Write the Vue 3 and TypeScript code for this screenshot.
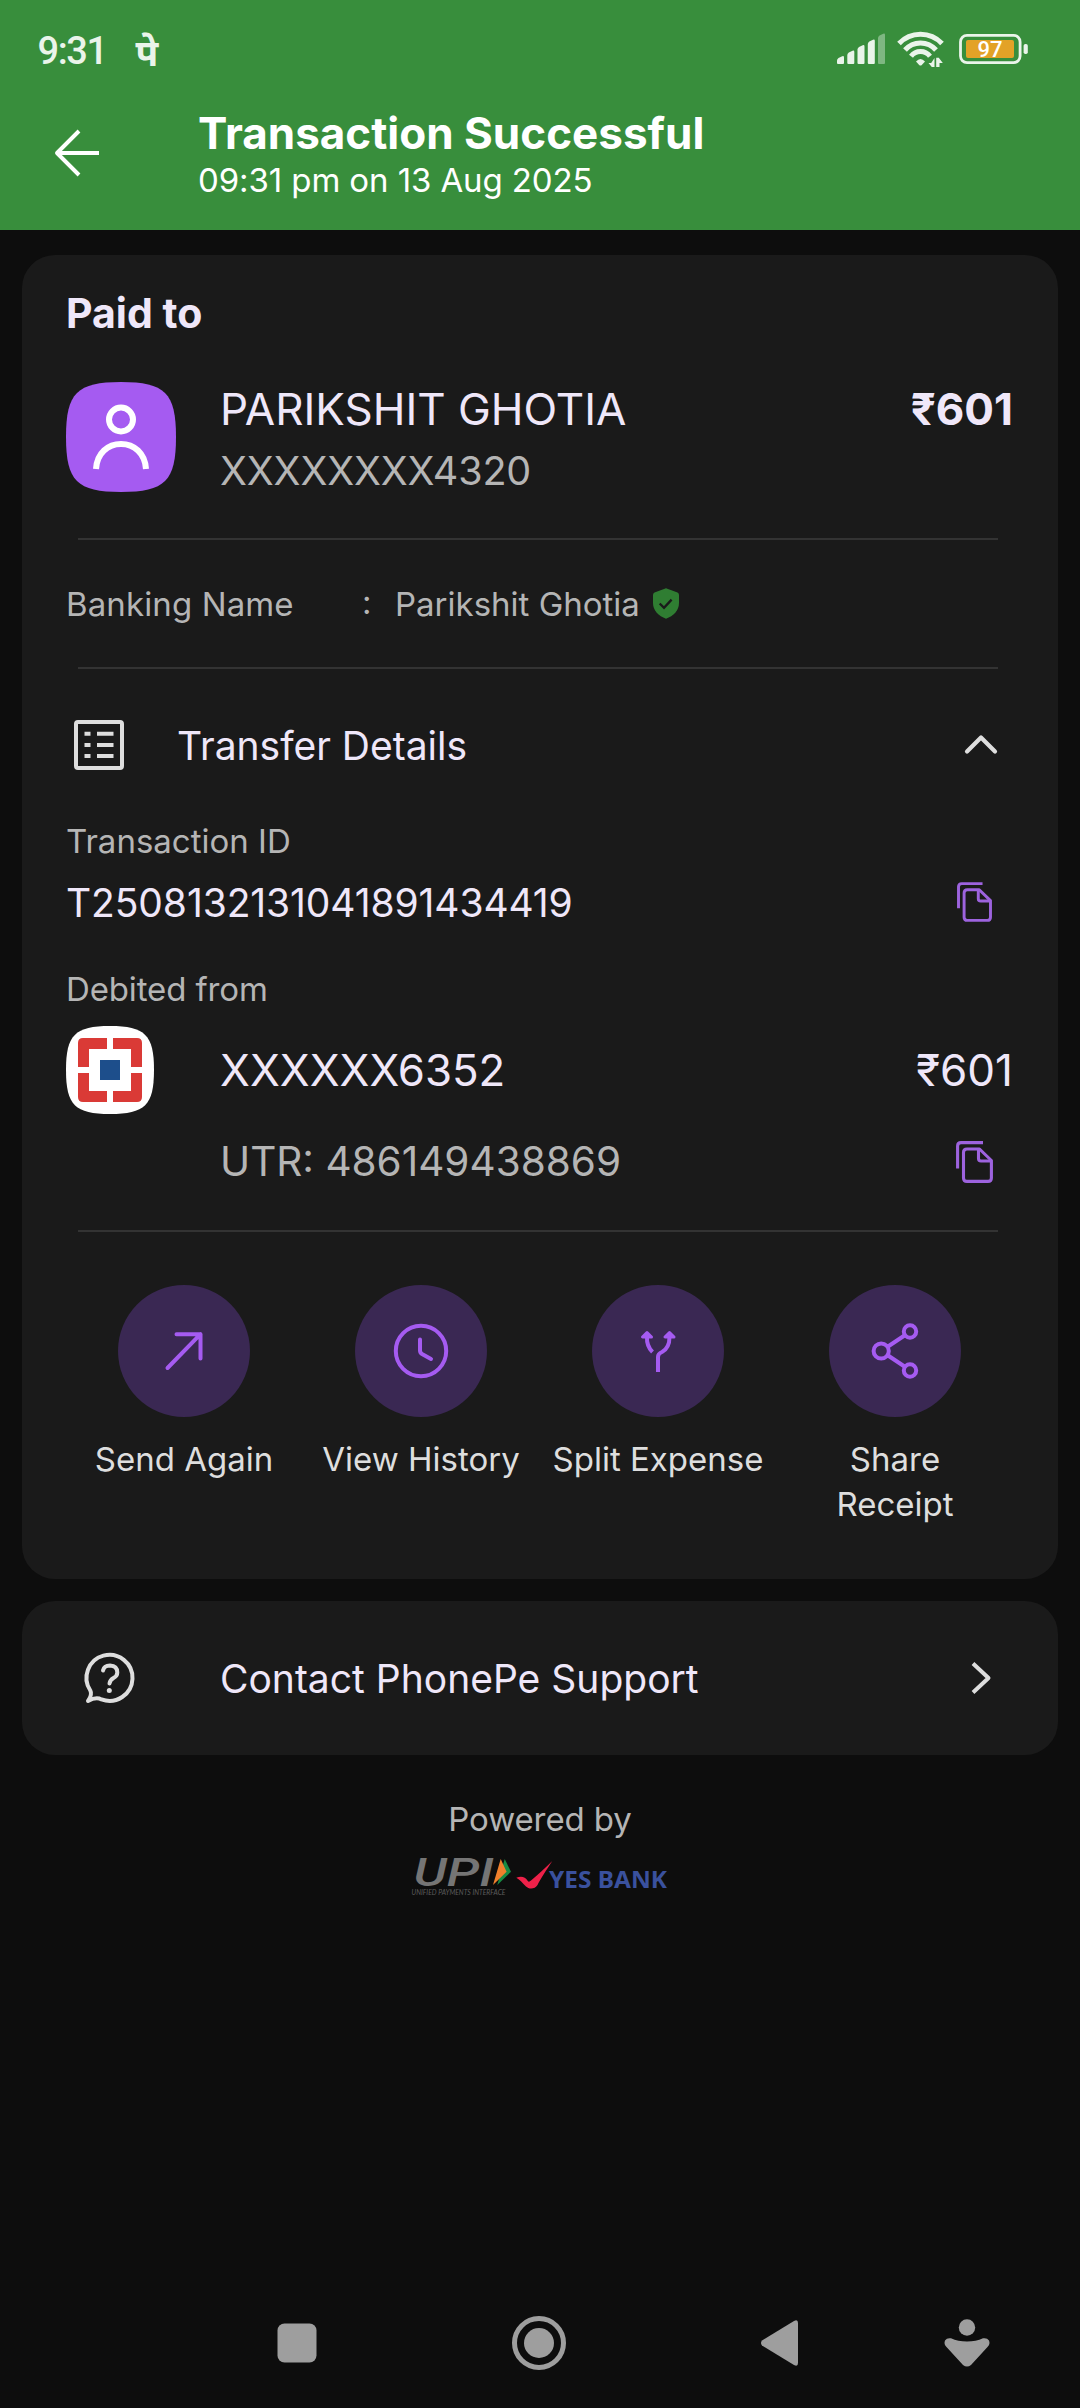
<script setup lang="ts">
interface Action {
  id: 'send' | 'history' | 'split' | 'share'
  label: string
}

const actions: Action[] = [
  { id: 'send', label: 'Send Again' },
  { id: 'history', label: 'View History' },
  { id: 'split', label: 'Split Expense' },
  { id: 'share', label: 'Share Receipt' },
]

const signalBars = [
  { x: 0, top: 23 },
  { x: 10.3, top: 17.5 },
  { x: 20.5, top: 12 },
  { x: 30.8, top: 6.5 },
  { x: 41, top: 0.5 },
]
</script>

<template>
  <div class="screen">
    <header class="header">
      <div class="status">
        <span class="clock">9:31</span>
        <span class="pe">पे</span>
        <svg class="signal" width="49" height="32" viewBox="0 0 49 32">
          <path
            v-for="(b, i) in signalBars"
            :key="b.x"
            :d="`M${b.x} ${b.top + 4.5} Q${b.x} ${b.top + 3} ${b.x + 1.5} ${b.top + 2} L${b.x + 5.2} ${b.top + 0.3} Q${b.x + 7} ${b.top - 0.5} ${b.x + 7} ${b.top + 1.5} V30 Q${b.x + 7} 31 ${b.x + 6} 31 H${b.x + 1} Q${b.x} 31 ${b.x} 30Z`"
            fill="#eaf4ea"
            :opacity="i === 4 ? 0.4 : 1"
          />
        </svg>
        <svg class="wifi" width="48" height="38" viewBox="0 0 48 38">
          <g fill="none" stroke="#eaf4ea" stroke-width="5">
            <path d="M2 13.5 A29.5 29.5 0 0 1 45 13.5" />
            <path d="M8 20 A20.5 20.5 0 0 1 39 20" />
            <path d="M14 26.2 A12 12 0 0 1 33 26.2" />
          </g>
          <path d="M19 31.5 Q23.5 26.5 28 31.5 L24.8 35 Q23.5 36.2 22.2 35Z" fill="#eaf4ea" />
          <path
            d="M31.5 33 H34.2 L37.5 28 V37 H34.800Z M39.2 27.800 H41.8 L45.8 33 H42.5 V37 H39.2Z"
            fill="#eaf4ea"
          />
        </svg>
        <svg class="battery" width="70" height="32" viewBox="0 0 70 32">
          <rect x="1.5" y="2.4" width="59.6" height="27.2" rx="6.5" fill="none" stroke="#eaf4ea" stroke-width="2.8" />
          <rect x="7" y="7" width="48" height="18" rx="2" fill="#e3a227" />
          <rect x="64.6" y="11" width="4.2" height="10" rx="1.8" fill="#eaf4ea" />
          <text x="18.6" y="24.2" textLength="25" class="level">97</text>
        </svg>
      </div>
      <div class="appbar">
        <svg class="back" width="46" height="50" viewBox="0 0 46 50">
          <path
            d="M25 3 L3 25 L25 47 M3 25 H45"
            fill="none"
            stroke="#fff"
            stroke-width="3.9"
            stroke-linejoin="round"
          />
        </svg>
        <div class="heading">
          <h1>Transaction Successful</h1>
          <p>09:31 pm on 13 Aug 2025</p>
        </div>
      </div>
    </header>

    <main class="content">
      <section class="card receipt">
        <h2 class="paid">Paid to</h2>
        <div class="payee">
          <svg class="avatar" width="110" height="110" viewBox="0 0 110 110">
            <path d="M55 0 C99 0 110 11 110 55 S99 110 55 110 S0 99 0 55 S11 0 55 0Z" fill="#a55bf1" />
            <g fill="none" stroke="#fff" stroke-width="6">
              <circle cx="55" cy="37.5" r="12" />
              <path d="M30 87 C31 71 42 62 55 62 S79 71 80 87" />
            </g>
          </svg>
          <div class="who">
            <div class="name">PARIKSHIT GHOTIA</div>
            <div class="masked">XXXXXXXX4320</div>
          </div>
          <div class="amount strong">₹601</div>
        </div>

        <hr class="d1" />

        <div class="banking">
          <span class="bk">Banking Name</span>
          <span class="colon">:</span>
          <span class="bn">Parikshit Ghotia</span>
          <svg class="shield" width="26" height="31" viewBox="0 0 26 31">
            <path
              d="M13 .3 L24.5 4.6 Q26 5.2 26 7 V15 C26 22.5 20.5 28 13 30.7 C5.5 28 0 22.5 0 15 V7 Q0 5.2 1.5 4.6Z"
              fill="#2f7d32"
            />
            <path d="M6.7 15.5 L11 19.8 L18.6 11.6" fill="none" stroke="#1a1a1a" stroke-width="2.3" />
          </svg>
        </div>

        <hr />

        <div class="transfer">
          <svg width="50" height="50" viewBox="0 0 50 50">
            <rect x="2" y="2" width="46" height="46" rx="2" fill="none" stroke="#dedede" stroke-width="4" />
            <path
              d="M10.5 13.7 H16.5 M10.5 25 H16.5 M10.5 36 H16.5 M23 13.7 H39.5 M23 25 H39.5 M23 36 H39.5"
              stroke="#dedede"
              stroke-width="4"
            />
          </svg>
          <span class="tt">Transfer Details</span>
          <svg class="up" width="34" height="22" viewBox="0 0 34 22">
            <path
              d="M3 17.5 L17 3.5 L31 17.5"
              fill="none"
              stroke="#dedede"
              stroke-width="4.2"
              stroke-linecap="round"
              stroke-linejoin="round"
            />
          </svg>
        </div>

        <div class="label l1">Transaction ID</div>
        <div class="txn">
          <span class="tid">T2508132131041891434419</span>
          <svg class="copy" width="35" height="40" viewBox="0 0 37 42">
            <g fill="none" stroke="#9d63de" stroke-width="3.1" stroke-linejoin="round">
              <path d="M1.6 27.5 V5 Q1.6 1.6 5 1.6 H27" />
              <path d="M11 8 H23.5 L35.4 19.5 V37 Q35.4 40.4 32 40.4 H11 Q7.5 40.4 7.5 37 V11.5 Q7.5 8 11 8Z" />
              <path d="M22.5 8 V17.5 Q22.5 20 25 20 H35" />
            </g>
          </svg>
        </div>

        <div class="label l2">Debited from</div>
        <div class="bank">
          <svg width="88" height="88" viewBox="0 0 88 88">
            <path d="M44 0 C79 0 88 9 88 44 S79 88 44 88 S0 79 0 44 S9 0 44 0Z" fill="#fff" />
            <path
              d="M41 12 V23 H23 V41 H12 V17 Q12 12 17 12Z M47 12 V23 H65 V41 H76 V17 Q76 12 71 12Z M41 76 V65 H23 V47 H12 V71 Q12 76 17 76Z M47 76 V65 H65 V47 H76 V71 Q76 76 71 76Z"
              fill="#da3a36"
            />
            <rect x="34" y="34" width="20" height="20" fill="#1d4e8b" />
          </svg>
          <span class="acct">XXXXXX6352</span>
          <span class="amount">₹601</span>
        </div>
        <div class="utr">
          <span class="un">UTR: 486149438869</span>
          <svg class="copy" width="37" height="42" viewBox="0 0 37 42">
            <g fill="none" stroke="#9d63de" stroke-width="3.1" stroke-linejoin="round">
              <path d="M1.6 27.5 V5 Q1.6 1.6 5 1.6 H27" />
              <path d="M11 8 H23.5 L35.4 19.5 V37 Q35.4 40.4 32 40.4 H11 Q7.5 40.4 7.5 37 V11.5 Q7.5 8 11 8Z" />
              <path d="M22.5 8 V17.5 Q22.5 20 25 20 H35" />
            </g>
          </svg>
        </div>

        <hr class="d3" />

        <div class="actions">
          <div v-for="a in actions" :key="a.id" class="action">
            <svg width="132" height="132" viewBox="0 0 132 132">
              <circle cx="66" cy="66" r="66" fill="#3a2853" />
              <g fill="none" stroke="#a55bf1" stroke-width="4" stroke-linecap="round" stroke-linejoin="round">
                <path v-if="a.id === 'send'" d="M49.5 83 L82.5 49.2 M58.5 49.2 H82.5 V73.5" />
                <template v-else-if="a.id === 'history'">
                  <circle cx="66" cy="66" r="25.2" />
                  <path d="M65 54.5 V65.5 Q65 67.8 67 69 L76 74" />
                </template>
                <g v-else-if="a.id === 'split'" stroke-linecap="butt">
                  <path d="M66 87 V72 Q66 68.5 70 67 Q77.5 63 77.5 52" />
                  <path d="M55 52 Q54.5 61 60.5 67" />
                  <path d="M55 47.5 L50.5 52 H59.5Z M77.5 47.5 L73 52 H82Z" fill="#a55bf1" stroke-width="3" />
                </g>
                <g v-else>
                  <circle cx="52.2" cy="66" r="7.6" />
                  <circle cx="81" cy="46.5" r="6.2" />
                  <circle cx="81" cy="85.5" r="6.2" />
                  <path d="M59 61.5 L75.5 50.5 M59 70.5 L75.5 81.5" />
                </g>
              </g>
            </svg>
            <span :class="a.id">{{ a.label }}</span>
          </div>
        </div>
      </section>

      <section class="card support">
        <svg width="52" height="52" viewBox="0 0 52 52">
          <path
            d="M4 49 Q8.5 42.5 6.3 38.5 A23 23 0 1 1 17.5 47.4 Q12 44.5 4 49Z"
            fill="none"
            stroke="#dedede"
            stroke-width="4"
            stroke-linejoin="round"
          />
          <path
            d="M19 18.5 Q20 13.5 26 13.5 Q33.3 13.8 33.3 20.5 Q33.3 24 29.5 26 Q26 28 25.5 31.5"
            fill="none"
            stroke="#dedede"
            stroke-width="4"
            stroke-linecap="round"
          />
          <circle cx="25.3" cy="38.5" r="2.5" fill="#dedede" />
        </svg>
        <span class="st">Contact PhonePe Support</span>
        <svg class="right" width="22" height="34" viewBox="0 0 22 34">
          <path d="M3 2.5 L18.5 17 L3 31.5" fill="none" stroke="#dedede" stroke-width="4" stroke-linejoin="round" />
        </svg>
      </section>

      <footer class="powered">
        <span class="pb">Powered by</span>
        <svg width="262" height="45" viewBox="0 0 262 45">
          <text x="4.5" y="31" textLength="80" lengthAdjust="spacingAndGlyphs" class="upi">UPI</text>
          <path d="M95.7 4 L102 16.7 L88.3 30Z" fill="#178a43" />
          <path d="M91.7 4 L97.6 16.7 L84 30Z" fill="#f0802c" />
          <text x="2.5" y="39.8" textLength="94" lengthAdjust="spacingAndGlyphs" class="tag">UNIFIED PAYMENTS INTERFACE</text>
          <path
            d="M107.3 22.7 C112 20.8 116 21.3 118.8 26 Q120 27.5 122 25.5 C129 19.5 136 13 143.3 6 C138 14 132 23 128.5 30 C126 34.3 120 34.5 117 31.5 C113.5 28 111 24.5 107.3 22.7Z"
            fill="#ee2149"
          />
          <text x="140" y="33.3" textLength="118" lengthAdjust="spacingAndGlyphs" class="yes">YES BANK</text>
        </svg>
      </footer>
    </main>

    <nav class="nav">
      <svg class="n1" width="40" height="40" viewBox="0 0 40 40">
        <rect x="0.5" y="0.5" width="39" height="39" rx="7" fill="#9e9e9e" />
      </svg>
      <svg class="n2" width="54" height="54" viewBox="0 0 54 54">
        <circle cx="27" cy="27" r="24.5" fill="none" stroke="#9e9e9e" stroke-width="5" />
        <circle cx="27" cy="27" r="15" fill="#9e9e9e" />
      </svg>
      <svg class="n3" width="38" height="46" viewBox="0 0 38 46">
        <path d="M1 20.5 L33 1 Q37 -1 37 3 V43 Q37 47 33 45 L1 25.5 Q-1 23 1 20.5Z" fill="#9e9e9e" />
      </svg>
      <svg class="n4" width="46" height="48" viewBox="0 0 46 48">
        <circle cx="23" cy="8.5" r="8.2" fill="#9e9e9e" />
        <path
          d="M7 19.3 Q14 22.5 23 22.5 Q32 22.5 39 19.3 Q43 18.5 45 21.5 Q46.5 25 43.5 28 L27 46 Q23 49 19 46 L2.5 28 Q-.5 25 1 21.5 Q3 18.5 7 19.3Z"
          fill="#9e9e9e"
        />
      </svg>
    </nav>
  </div>
</template>

<style>
body {
  margin: 0;
  background: #0d0d0d;
}
</style>

<style scoped>
.screen {
  width: 1080px;
  height: 2408px;
  background: #0d0d0d;
  color: #efe7f9;
  font-family: Inter, "Liberation Sans", sans-serif;
  font-optical-sizing: none;
  font-variation-settings: "opsz" 14;
  display: flex;
  flex-direction: column;
  white-space: nowrap;
  overflow: hidden;
}
svg {
  display: block;
  flex: none;
  overflow: visible;
}
h1, h2, p {
  margin: 0;
}
.header {
  height: 230px;
  background: #388e3c;
  color: #fff;
}
.status {
  height: 98px;
  display: flex;
  align-items: center;
  padding-left: 37.5px;
  box-sizing: border-box;
}
.clock {
  font: 500 38px/40px Roboto, sans-serif;
  letter-spacing: -1.4px;
  color: #eaf4ea;
  width: 98px;
  padding-top: 3px;
}
.pe {
  font: 700 37px/40px "Noto Sans", sans-serif;
  color: #eaf4ea;
  width: 40px;
  padding-top: 5px;
}
.signal {
  margin-left: auto;
}
.wifi {
  margin-left: 11px;
}
.battery {
  margin-left: 14px;
  margin-right: 51px;
}
.level {
  font: 500 22px Roboto, sans-serif;
  fill: #fff;
}
.appbar {
  display: flex;
}
.back {
  margin: 30px 0 0 54px;
}
.heading {
  margin-left: 98px;
  padding-top: 9px;
}
.heading h1 {
  font-size: 44px;
  line-height: 52px;
  font-weight: 700;
}
.heading p {
  font-size: 33px;
  line-height: 42px;
  letter-spacing: -0.1px;
}
.content {
  padding: 25px 22px 0;
}
.card {
  background: #1a1a1a;
  border-radius: 33px;
  padding: 0 44px;
  box-sizing: border-box;
}
.receipt {
  height: 1324px;
}
.paid {
  font-size: 41px;
  line-height: 116px;
  font-weight: 700;
}
.payee {
  display: flex;
  margin-top: 11px;
  height: 110px;
}
.who {
  margin-left: 44px;
}
.name {
  font-size: 44px;
  line-height: 54px;
}
.masked {
  font-size: 39.5px;
  letter-spacing: -0.15px;
  line-height: 50px;
  margin-top: 10px;
  color: #b5b5b5;
}
.amount {
  margin-left: auto;
  margin-right: 1px;
  font-size: 44px;
  line-height: 54px;
}
.strong {
  font-weight: 700;
}
hr {
  border: 0;
  height: 2px;
  background: #333;
  margin: 0 16px 0 12px;
}
.d1 {
  margin-top: 46px;
}
.banking {
  display: flex;
  align-items: center;
  height: 127px;
  font-size: 33px;
  color: #b5b5b5;
}
.bk {
  width: 296px;
  letter-spacing: 0.12px;
}
.colon {
  width: 33px;
  margin-top: -3px;
}
.shield {
  margin-left: 13px;
}
.transfer {
  display: flex;
  align-items: center;
  height: 151px;
  padding-left: 8px;
}
.tt {
  font-size: 39px;
  margin: 2px 0 0 53px;
}
.up {
  margin: 0 16px 0 auto;
}
.label {
  font-size: 33px;
  color: #b5b5b5;
}
.l1 {
  line-height: 42px;
}
.txn {
  display: flex;
  align-items: center;
  height: 80px;
  font-size: 39px;
  letter-spacing: -0.1px;
}
.txn .copy {
  margin: 0 22px 0 auto;
}
.l2 {
  padding-top: 10px;
  line-height: 74px;
  letter-spacing: -0.13px;
}
.bank {
  display: flex;
  align-items: center;
  height: 88px;
}
.acct {
  margin-left: 66px;
  font-size: 43.8px;
}
.utr {
  display: flex;
  align-items: center;
  height: 95px;
  padding-left: 154px;
  font-size: 40.5px;
  color: #b5b5b5;
}
.utr .copy {
  margin: 0 21px 0 auto;
}
.d3 {
  margin-top: 21px;
}
.actions {
  display: grid;
  grid-template-columns: repeat(4, 237px);
  margin: 53px 0 0 -0.5px;
}
.action {
  display: flex;
  flex-direction: column;
  align-items: center;
  font-size: 33px;
  line-height: 45px;
  color: #dedede;
}
.action span {
  margin-top: 20px;
}
.action .share {
  width: 150px;
  white-space: normal;
  text-align: center;
}
.support {
  margin-top: 22px;
  height: 154px;
  display: flex;
  align-items: center;
  padding-left: 62px;
}
.st {
  font-size: 39px;
  margin-left: 84px;
}
.right {
  margin: 0 22px 0 auto;
}
.powered {
  display: flex;
  flex-direction: column;
  align-items: center;
  margin-top: 44px;
  font-size: 33px;
  line-height: 40px;
  color: #b5b5b5;
}
.pb {
  letter-spacing: -0.1px;
}
.powered svg {
  margin-top: 16px;
}
.upi {
  font: italic 500 38px Roboto, sans-serif;
  fill: #757575;
}
.tag {
  font: italic 400 7.4px Lato, sans-serif;
  fill: #5c5c5c;
}
.yes {
  font: 700 23px "Noto Sans", sans-serif;
  fill: #3a519e;
}
.nav {
  margin-top: auto;
  height: 130px;
  display: flex;
  align-items: center;
  padding-left: 277px;
}
.n2 {
  margin-left: 195px;
}
.n3 {
  margin-left: 195px;
}
.n4 {
  margin-left: 145px;
}
</style>
